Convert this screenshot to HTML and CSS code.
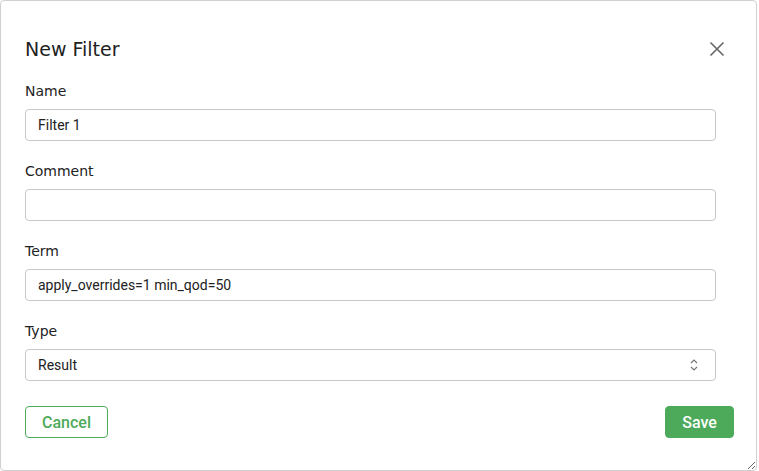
FILE: index.html
```html
<!DOCTYPE html>
<html>
<head>
<meta charset="utf-8">
<link rel="stylesheet" href="styles.css">
</head>
<body>
<div class="dialog">
  <div class="header">
    <div class="title">New Filter</div>
    <button class="close" aria-label="Close">
      <svg width="16" height="16" viewBox="0 0 16 16"><path d="M1.5 1.5 L14.5 14.5 M14.5 1.5 L1.5 14.5" stroke="#666" stroke-width="1.6" fill="none"/></svg>
    </button>
  </div>
  <div class="form">
    <div class="field">
      <label class="label">Name</label>
      <div class="input">Filter 1</div>
    </div>
    <div class="field">
      <label class="label">Comment</label>
      <div class="input"></div>
    </div>
    <div class="field">
      <label class="label">Term</label>
      <div class="input">apply_overrides=1 min_qod=50</div>
    </div>
    <div class="field">
      <label class="label">Type</label>
      <div class="input select">
        <span>Result</span>
        <svg width="10" height="14" viewBox="0 0 10 14"><path d="M2 5 L5 2 L8 5 M2 9 L5 12 L8 9" stroke="#777" stroke-width="1.2" fill="none"/></svg>
      </div>
    </div>
  </div>
  <div class="footer">
    <button class="btn cancel">Cancel</button>
    <button class="btn save">Save</button>
  </div>
</div>
</body>
</html>
```
FILE: styles.css
```css
html, body {
  margin: 0;
  padding: 0;
  background: #fff;
}
.dialog {
  box-sizing: border-box;
  width: 757px;
  height: 471px;
  border: 1px solid #d0d0d0;
  border-radius: 4px;
  background: #fff;
  resize: both;
  overflow: hidden;
  display: flex;
  flex-direction: column;
}
.header {
  display: flex;
  align-items: center;
  justify-content: space-between;
  padding: 36px 31px 0 24px;
  height: 24px;
}
.title {
  font-family: "DejaVu Sans", sans-serif;
  font-size: 19px;
  line-height: 24px;
  color: #222;
}
.close {
  border: 0;
  background: none;
  padding: 0;
  width: 16px;
  height: 16px;
  display: flex;
}
.form {
  padding: 20px 40px 0 24px;
}
.field {
  display: flex;
  flex-direction: column;
  margin-bottom: 20px;
}
.label {
  font-family: "DejaVu Sans", sans-serif;
  font-size: 14px;
  line-height: 20px;
  color: #222;
  margin-bottom: 8px;
}
.input {
  box-sizing: border-box;
  height: 32px;
  border: 1px solid #c8c8c8;
  border-radius: 4px;
  padding: 0 12px;
  font-family: Roboto, sans-serif;
  font-size: 14px;
  color: #222;
  display: flex;
  align-items: center;
}
.select {
  justify-content: space-between;
  padding-right: 16px;
}
.footer {
  display: flex;
  justify-content: space-between;
  padding: 5px 22px 0 24px;
}
.btn {
  box-sizing: border-box;
  height: 32px;
  border-radius: 4px;
  font-family: Roboto, sans-serif;
  font-size: 16px;
  font-weight: 500;
  padding: 0;
}
.cancel {
  width: 83px;
  background: #fff;
  border: 1px solid #4caa5a;
  color: #4caa5a;
}
.save {
  width: 69px;
  background: #4caa5a;
  border: 1px solid #4caa5a;
  color: #fff;
}
```
